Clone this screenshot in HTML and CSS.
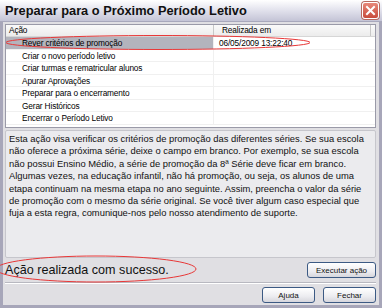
FILE: index.html
```html
<!DOCTYPE html>
<html>
<head>
<meta charset="utf-8">
<link rel="stylesheet" href="styles.css">
</head>
<body>
<div class="window">
  <div class="titlebar">
    <span class="title">Preparar para o Próximo Período Letivo</span>
    <span class="close"><svg width="15" height="15" viewBox="0 0 15 15"><path d="M4 4 L11 11 M11 4 L4 11" stroke="#fff" stroke-width="2" stroke-linecap="square"/></svg></span>
  </div>
  <div class="content">
    <div class="list">
      <div class="list-head">
        <div class="col1">Ação</div>
        <div class="col2">Realizada em</div>
      </div>
      <div class="row selected"><div class="col1">Rever critérios de promoção</div><div class="col2">06/05/2009 13:22:40</div></div>
      <div class="row"><div class="col1">Criar o novo período letivo</div><div class="col2"></div></div>
      <div class="row"><div class="col1">Criar turmas e rematricular alunos</div><div class="col2"></div></div>
      <div class="row"><div class="col1">Apurar Aprovações</div><div class="col2"></div></div>
      <div class="row"><div class="col1">Preparar para o encerramento</div><div class="col2"></div></div>
      <div class="row"><div class="col1">Gerar Históricos</div><div class="col2"></div></div>
      <div class="row"><div class="col1">Encerrar o Período Letivo</div><div class="col2"></div></div>
    </div>
    <div class="desc">Esta ação visa verificar os critérios de promoção das diferentes séries. Se sua escola não oferece a próxima série, deixe o campo em branco. Por exemplo, se sua escola não possui Ensino Médio, a série de promoção da 8ª Série deve ficar em branco. Algumas vezes, na educação infantil, não há promoção, ou seja, os alunos de uma etapa continuam na mesma etapa no ano seguinte. Assim, preencha o valor da série de promoção com o mesmo da série original. Se você tiver algum caso especial que fuja a esta regra, comunique-nos pelo nosso atendimento de suporte.</div>
    <div class="status-row">
      <span class="status">Ação realizada com sucesso.</span>
      <button class="btn btn-exec">Executar ação</button>
    </div>
    <div class="sep"></div>
    <div class="footer">
      <button class="btn">Ajuda</button>
      <button class="btn">Fechar</button>
    </div>
  </div>
  <svg class="marks" width="382" height="308" viewBox="0 0 382 308">
    <ellipse cx="158" cy="42.5" rx="152" ry="7" fill="none" stroke="#e83838" stroke-width="1"/>
    <ellipse cx="96" cy="269" rx="100" ry="13" fill="none" stroke="#e83838" stroke-width="1"/>
  </svg>
</div>
</body>
</html>
```
FILE: styles.css
```css
* { box-sizing: border-box; }
html, body { margin: 0; padding: 0; }
body {
  width: 382px;
  height: 308px;
  overflow: hidden;
  font-family: "Liberation Sans", Arial, sans-serif;
  background: #e0dfe3;
}
.window {
  position: relative;
  width: 382px;
  height: 308px;
  display: flex;
  flex-direction: column;
  background: #e0dfe3;
  border-left: 3px solid #a7a6b9;
  border-right: 3px solid #a7a6b9;
  border-bottom: 3px solid #a7a6b9;
}
.titlebar {
  height: 22px;
  margin: 0 -3px;
  display: flex;
  align-items: center;
  justify-content: space-between;
  padding: 0 3px 0 5px;
  background: linear-gradient(#ffffff, #e4e4ee 45%, #c4c4d6);
  border-bottom: 1px solid #a8a8bc;
}
.title {
  font-weight: bold;
  font-size: 12.8px;
  color: #111;
}
.close {
  width: 17px;
  height: 17px;
  display: flex;
  align-items: center;
  justify-content: center;
  background: linear-gradient(#e7887a, #c84c3c);
  border: 1px solid #fff;
  border-radius: 3px;
  box-shadow: 0 0 0 1px #b86a60;
}
.content {
  flex: 1;
  display: flex;
  flex-direction: column;
  padding: 2px 3px 0 2px;
}
.list {
  height: 104px;
  background: #fff;
  border: 1px solid #9a9aa8;
  font-size: 8.3px;
  letter-spacing: -0.15px;
  color: #000;
}
.list-head {
  display: flex;
  height: 12px;
  background: linear-gradient(#fafafa, #ececec);
  border-bottom: 1px solid #d6d6d6;
}
.list-head .col1 { width: 208px; padding-left: 3px; border-right: 1px solid #c8c8c8; line-height: 11px; }
.list-head .col2 { flex: 1; padding-left: 8px; line-height: 11px; margin-right: 4px; border-right: 1px solid #c8c8c8; }
.row {
  display: flex;
  height: 12.5px;
  border-bottom: 1px solid #f0f0f0;
}
.row .col1 { width: 208px; padding-left: 16px; line-height: 12px; border-right: 1px solid #f0f0f0; }
.row .col2 { flex: 1; padding-left: 5px; line-height: 12px; }
.row.selected .col1 { background: #b3b4bd; }
.desc {
  margin-top: 2px;
  height: 128px;
  background: #ebebee;
  border: 1px solid #c6c6cc;
  border-radius: 2px;
  padding: 2px 3px;
  font-size: 9.4px;
  line-height: 12.4px;
  color: #111;
}
.status-row {
  display: flex;
  align-items: center;
  justify-content: space-between;
  height: 24px;
}
.status {
  font-size: 12.6px;
  color: #111;
}
.btn {
  font-family: "Liberation Sans", Arial, sans-serif;
  font-size: 8px;
  color: #111;
  height: 16px;
  padding: 0;
  background: linear-gradient(#ffffff, #ececf0 60%, #d6d6dc);
  border: 1px solid #3c5a84;
  border-radius: 3px;
}
.btn-exec { width: 69px; }
.sep {
  height: 2px;
  border-top: 1px solid #b8b8c0;
  border-bottom: 1px solid #fff;
}
.footer {
  display: flex;
  justify-content: flex-end;
  gap: 8px;
  padding-top: 3px;
}
.footer .btn { width: 53px; }
.marks {
  position: absolute;
  left: -3px;
  top: 0;
  pointer-events: none;
}
```
